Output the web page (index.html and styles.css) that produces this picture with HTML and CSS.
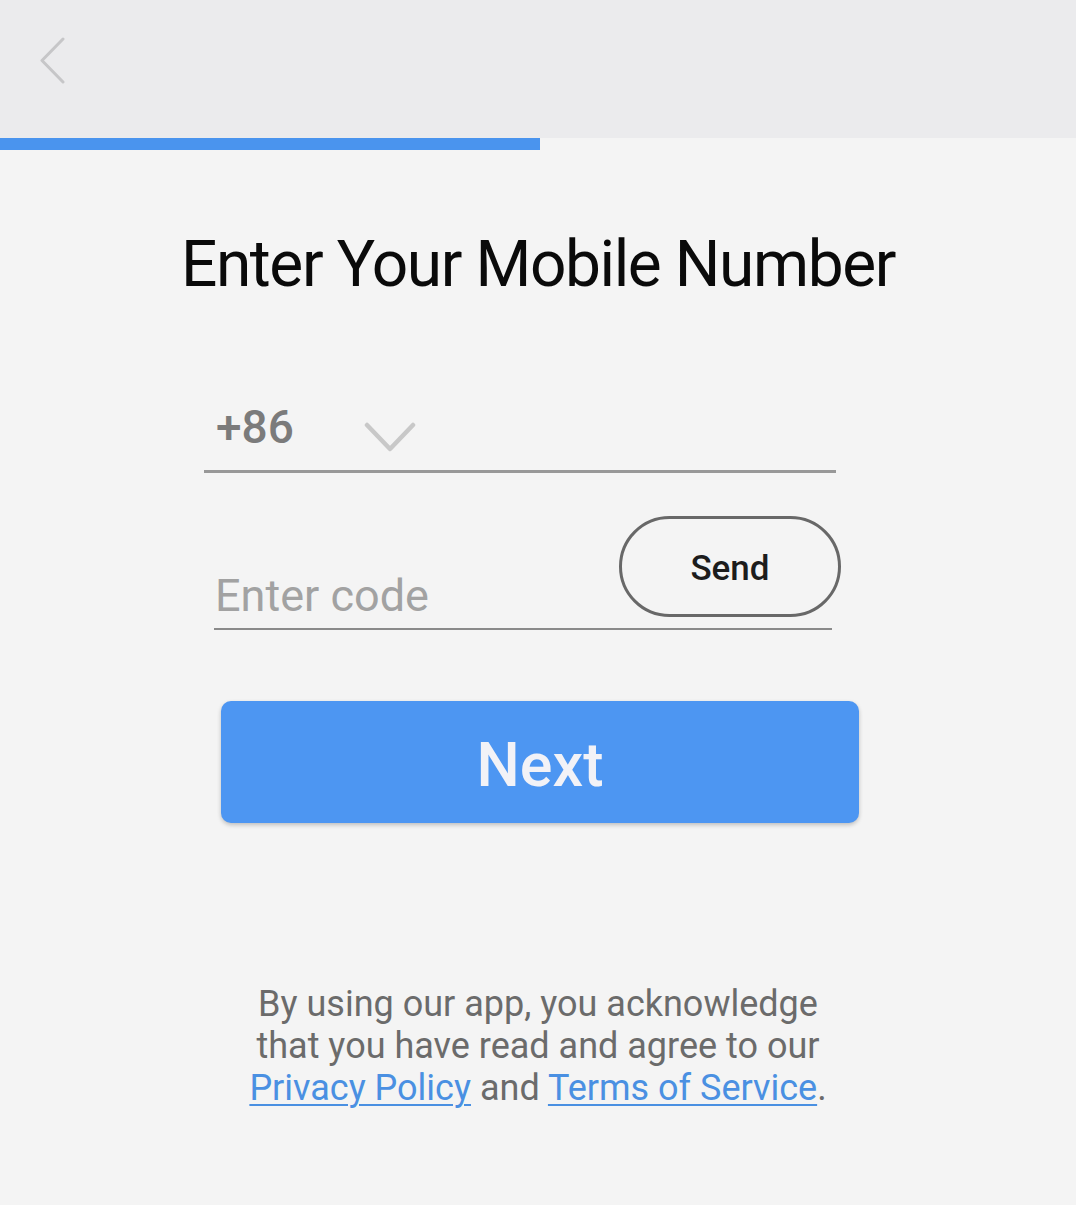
FILE: index.html
```html
<!DOCTYPE html>
<html>
<head>
<meta charset="utf-8">
<link rel="stylesheet" href="styles.css">
</head>
<body>
<div class="screen">
  <header class="topbar">
    <svg class="back" width="30" height="48" viewBox="0 0 30 48"><path d="M24 2 L3 23.5 L24 45" fill="none" stroke="#c6c6c8" stroke-width="3" stroke-linecap="round" stroke-linejoin="round"/></svg>
  </header>
  <div class="progress"><div class="progress-bar"></div></div>
  <h1 class="title">Enter Your Mobile Number</h1>
  <div class="phone-field">
    <span class="code">+86</span>
    <svg class="caret" width="52" height="32" viewBox="0 0 52 32"><path d="M3 3 L26 27 L49 3" fill="none" stroke="#c8c8c8" stroke-width="4.5" stroke-linecap="round" stroke-linejoin="round"/></svg>
  </div>
  <div class="code-field">
    <span class="placeholder">Enter code</span>
    <button class="send">Send</button>
  </div>
  <button class="next">Next</button>
  <p class="legal">By using our app, you acknowledge<br>that you have read and agree to our<br><a href="#">Privacy Policy</a> and <a href="#">Terms of Service</a>.</p>
</div>
</body>
</html>
```
FILE: styles.css
```css
html, body {
  margin: 0;
  padding: 0;
  background: #f4f4f4;
}
body {
  font-family: Roboto, "Liberation Sans", sans-serif;
}
.screen {
  width: 1076px;
  height: 1205px;
  display: flex;
  flex-direction: column;
  overflow: hidden;
}
.topbar {
  height: 138px;
  background: #ebebed;
  display: flex;
  align-items: flex-start;
  padding-left: 39px;
  box-sizing: border-box;
}
.back {
  margin-top: 37px;
}
.progress {
  height: 12px;
}
.progress-bar {
  width: 540px;
  height: 100%;
  background: #4a94ee;
}
.title {
  margin: 77px 0 0;
  font-size: 64px;
  line-height: 76px;
  font-weight: 400;
  letter-spacing: -1.4px;
  color: #0a0a0a;
  text-align: center;
}
.phone-field {
  margin: 96px 0 0 204px;
  width: 632px;
  height: 71px;
  border-bottom: 3px solid #989898;
  display: flex;
  align-items: flex-start;
}
.code {
  margin-left: 12px;
  font-size: 46px;
  line-height: 56px;
  font-weight: 500;
  color: #7b7b7b;
}
.caret {
  margin-left: 70px;
  margin-top: 23px;
}
.code-field {
  margin: 43px 0 0 214px;
  width: 618px;
  border-bottom: 2px solid #8a8a8a;
  display: flex;
  align-items: flex-end;
  justify-content: space-between;
}
.placeholder {
  margin-left: 1px;
  padding-bottom: 6px;
  font-size: 45px;
  line-height: 52px;
  color: #a2a2a2;
}
.send {
  width: 222px;
  height: 101px;
  margin: 0 -9px 11px 0;
  border: 3px solid #686868;
  border-radius: 51px;
  background: transparent;
  font-family: Roboto, "Liberation Sans", sans-serif;
  font-size: 35px;
  font-weight: 500;
  color: #1c1c1c;
  padding: 3px 0 0;
}
.next {
  margin: 71px 0 0 221px;
  width: 638px;
  height: 122px;
  border: none;
  border-radius: 10px;
  background: #4d96f2;
  box-shadow: 0 2px 4px rgba(0, 0, 0, 0.22);
  font-family: Roboto, "Liberation Sans", sans-serif;
  font-size: 61px;
  font-weight: 500;
  color: #f2f2f7;
  padding: 6px 0 0;
}
.legal {
  margin: 160px 0 0;
  font-size: 36px;
  line-height: 42px;
  color: #6b6b6b;
  text-align: center;
}
.legal a {
  color: #4a90e2;
  text-decoration: underline;
  text-underline-offset: 4px;
  text-decoration-thickness: 2px;
}
```
